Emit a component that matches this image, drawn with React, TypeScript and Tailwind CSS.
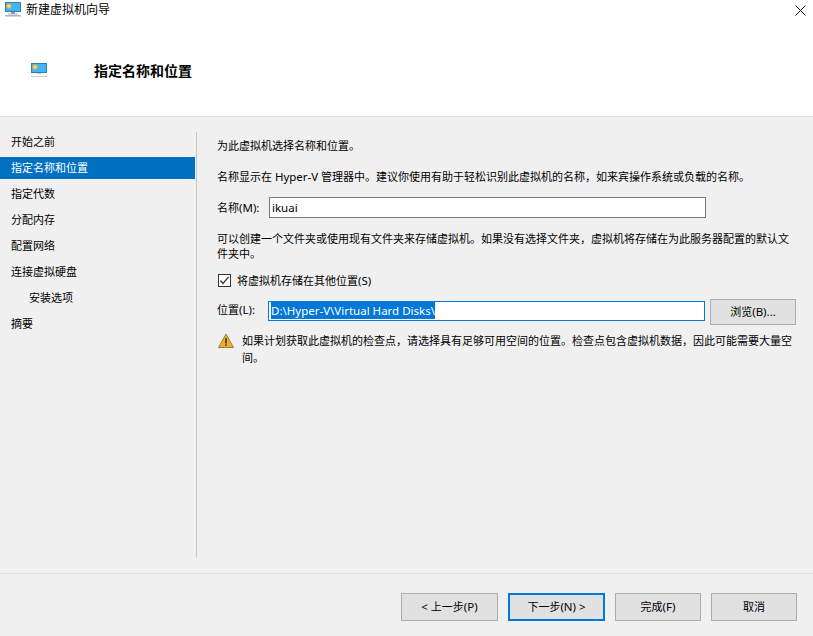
const cjk = "font-['Noto_Sans','Noto_Sans_CJK_SC',sans-serif]";

function VmIcon({ small }: { small?: boolean }) {
  return (
    <svg width="16" height="16" viewBox="0 0 16 16" className="shrink-0">
      <rect x="0" y="0" width="16" height="10" fill="#2f7fb0" />
      <rect x="1" y="1" width="14" height="8" fill="#45b4f5" />
      <path d="M4 0.8L4.6 2.1L5.9 1.4L5.6 2.9L7.1 3.1L6 4.1L7.1 5.1L5.6 5.3L5.9 6.8L4.6 6.1L4 7.4L3.4 6.1L2.1 6.8L2.4 5.3L0.9 5.1L2 4.1L0.9 3.1L2.4 2.9L2.1 1.4L3.4 2.1Z" fill="#f4b63c" />
      <circle cx="4" cy="4.1" r="1.5" fill="#f9d56b" />
      {small ? (
        <>
          <rect x="6" y="10" width="4" height="1" fill="#b9c7d2" />
          <rect x="0" y="13" width="16" height="1" fill="#c5cdd8" />
        </>
      ) : (
        <>
          <rect x="6" y="10" width="4" height="2" fill="#8c9aa6" />
          <rect x="3" y="11.5" width="10" height="1" fill="#a8b4be" />
          <rect x="0" y="13" width="16" height="1.5" fill="#a9b3c4" />
        </>
      )}
    </svg>
  );
}

function Latin({ children }: { children: string }) {
  return <span className="text-[11.5px]">{children}</span>;
}

function WizardButton({ children, wide, focused }: { children: React.ReactNode; wide?: boolean; focused?: boolean }) {
  const width = wide ? "w-[97px]" : "w-[86px]";
  const border = focused ? "border-2 border-[#0078d7]" : "border border-[#adadad]";
  return <button className={`h-7 ${width} ${border} bg-[#e1e1e1] text-[11px] text-black`}>{children}</button>;
}

const steps = ["开始之前", "指定名称和位置", "指定代数", "分配内存", "配置网络", "连接虚拟硬盘", "安装选项", "摘要"];

export default function App() {
  return (
    <div className={`flex h-[636px] w-[813px] flex-col overflow-hidden bg-[#f0f0f0] text-[11px] text-black ${cjk}`}>
      <div className="h-[117px] border-b border-[#dfdfdf] bg-white">
        <div className="flex h-[18px] items-center justify-between pl-[5px] pr-[7px] pt-[2px]">
          <div className="flex items-center gap-[5px]">
            <VmIcon />
            <span className="text-xs">新建虚拟机向导</span>
          </div>
          <svg width="11" height="11" viewBox="0 0 11 11">
            <path d="M0.5 0.5L10.5 10.5M10.5 0.5L0.5 10.5" stroke="#111" strokeWidth="1" />
          </svg>
        </div>
        <div className="mt-[43px] flex items-center pl-[31px]">
          <VmIcon small />
          <h1 className="ml-[47px] text-sm font-bold">指定名称和位置</h1>
        </div>
      </div>

      <div className="flex flex-1 pt-[14px]">
        <nav className="w-[196px]">
          {steps.map((step) => (
            <div
              key={step}
              className={
                step === "指定名称和位置"
                  ? "mb-[4px] mr-px flex h-[22px] items-center bg-[#0070c0] pl-[11px] text-white"
                  : step === "安装选项"
                    ? "mb-[4px] flex h-[22px] items-center pl-[29px]"
                    : "mb-[4px] flex h-[22px] items-center pl-[11px]"
              }
            >
              {step}
            </div>
          ))}
        </nav>
        <div className="mt-px h-[426px] w-px bg-[#c8c8c8]" />
        <main className="flex-1 pl-[20px] pr-[16px] pt-[7px]">
          <p className="leading-[16px]">为此虚拟机选择名称和位置。</p>
          <p className="mt-[15px] leading-[16px]">
            名称显示在 <Latin>Hyper-V</Latin> 管理器中。建议你使用有助于轻松识别此虚拟机的名称，如来宾操作系统或负载的名称。
          </p>
          <div className="mt-[12px] flex items-center">
            <span className="w-[52px]">
              名称<Latin>(M):</Latin>
            </span>
            <div className="flex h-[21px] w-[437px] items-center border border-[#7a7a7a] bg-white pl-[2px] text-[11.5px]">ikuai</div>
          </div>
          <p className="mt-[13px] leading-[15px]">
            可以创建一个文件夹或使用现有文件夹来存储虚拟机。如果没有选择文件夹，虚拟机将存储在为此服务器配置的默认文件夹中。
          </p>
          <label className="mt-[11px] flex items-center gap-[6px]">
            <svg width="13" height="13" viewBox="0 0 13 13" className="ml-px shrink-0">
              <rect x="0.5" y="0.5" width="12" height="12" fill="#fff" stroke="#333" />
              <path d="M2.5 6.5L5 9.5L10.5 3" fill="none" stroke="#333" strokeWidth="1.2" />
            </svg>
            <span>
              将虚拟机存储在其他位置<Latin>(S)</Latin>
            </span>
          </label>
          <div className="mt-[9px] flex items-center">
            <span className="mb-[3px] w-[51px]">
              位置<Latin>(L):</Latin>
            </span>
            <div className="mb-[2px] flex h-[20px] w-[437px] items-center border border-[#0078d7] bg-white pl-[2px] text-[11.5px]">
              <span className="bg-[#0078d7] text-white">D:\Hyper-V\Virtual Hard Disks\</span>
            </div>
            <button className="ml-[5px] h-[26px] w-[86px] border border-[#adadad] bg-[#e1e1e1] text-[11px]">
              浏览<Latin>(B)...</Latin>
            </button>
          </div>
          <div className="mt-[7px] flex gap-[8px]">
            <svg width="16" height="15" viewBox="0 0 16 15" className="mt-[1px] ml-px shrink-0">
              <path d="M8 1L15.5 14.5H0.5Z" fill="#f0ad2e" stroke="#8a6a1c" strokeWidth="0.8" />
              <rect x="7.3" y="5" width="1.4" height="5.5" fill="#222" />
              <rect x="7.3" y="11.3" width="1.4" height="1.5" fill="#222" />
            </svg>
            <p className="leading-[17px]">
              如果计划获取此虚拟机的检查点，请选择具有足够可用空间的位置。检查点包含虚拟机数据，因此可能需要大量空间。
            </p>
          </div>
        </main>
      </div>

      <div className="h-[63px] border-t border-[#dfdfdf]">
        <div className="flex justify-end gap-[10px] pr-[16px] pt-[19px]">
          <WizardButton wide>
            <Latin>{"< "}</Latin>上一步<Latin>(P)</Latin>
          </WizardButton>
          <WizardButton wide focused>
            下一步<Latin>(N) &gt;</Latin>
          </WizardButton>
          <WizardButton>
            完成<Latin>(F)</Latin>
          </WizardButton>
          <WizardButton>取消</WizardButton>
        </div>
      </div>
    </div>
  );
}
